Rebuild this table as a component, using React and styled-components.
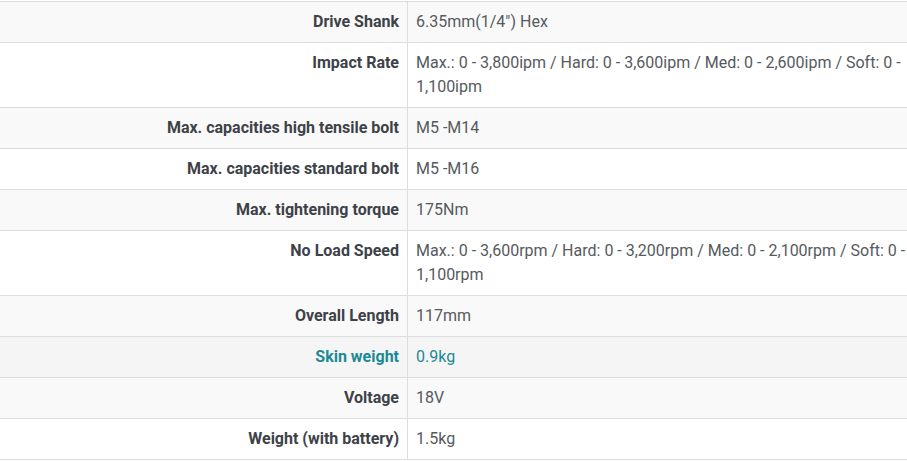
import React from "react";
import styled, { createGlobalStyle } from "styled-components";

const Global = createGlobalStyle`
  html, body { margin: 0; padding: 0; background: #fff; }
  body { font-family: Roboto, "Liberation Sans", sans-serif; }
`;

const Wrap = styled.div`
  padding-top: 1px;
  width: 907px;
`;

const Table = styled.table`
  width: 907px;
  border-collapse: collapse;
  font-size: 16px;
  line-height: 24px;
  table-layout: fixed;
`;

const Row = styled.tr`
  background: ${(p) => (p.$hover ? "#f5f5f5" : p.$odd ? "#f9f9f9" : "#fff")};
  border-top: 1px solid #dddddd;
  border-bottom: 1px solid #dddddd;
`;

const Label = styled.th`
  width: 391px;
  padding: 8px;
  text-align: right;
  vertical-align: top;
  font-weight: 700;
  color: ${(p) => (p.$hover ? "#1b8a94" : "#3d4248")};
  border-right: 1px solid #dddddd;
`;

const Value = styled.td`
  padding: 8px 0 8px 8px;
  text-align: left;
  vertical-align: top;
  color: ${(p) => (p.$hover ? "#1b8a94" : "#555a60")};
`;

const rows = [
  ["Drive Shank", "6.35mm(1/4\") Hex"],
  ["Impact Rate", "Max.: 0 - 3,800ipm / Hard: 0 - 3,600ipm / Med: 0 - 2,600ipm / Soft: 0 - 1,100ipm"],
  ["Max. capacities high tensile bolt", "M5 -M14"],
  ["Max. capacities standard bolt", "M5 -M16"],
  ["Max. tightening torque", "175Nm"],
  ["No Load Speed", "Max.: 0 - 3,600rpm / Hard: 0 - 3,200rpm / Med: 0 - 2,100rpm / Soft: 0 - 1,100rpm"],
  ["Overall Length", "117mm"],
  ["Skin weight", "0.9kg"],
  ["Voltage", "18V"],
  ["Weight (with battery)", "1.5kg"],
];

export default function App() {
  return (
    <Wrap>
      <Global />
      <Table>
        <tbody>
          {rows.map(([k, v], i) => {
            const hover = k === "Skin weight";
            return (
              <Row key={k} $odd={i % 2 === 0} $hover={hover}>
                <Label $hover={hover}>{k}</Label>
                <Value $hover={hover}>{v}</Value>
              </Row>
            );
          })}
        </tbody>
      </Table>
    </Wrap>
  );
}
